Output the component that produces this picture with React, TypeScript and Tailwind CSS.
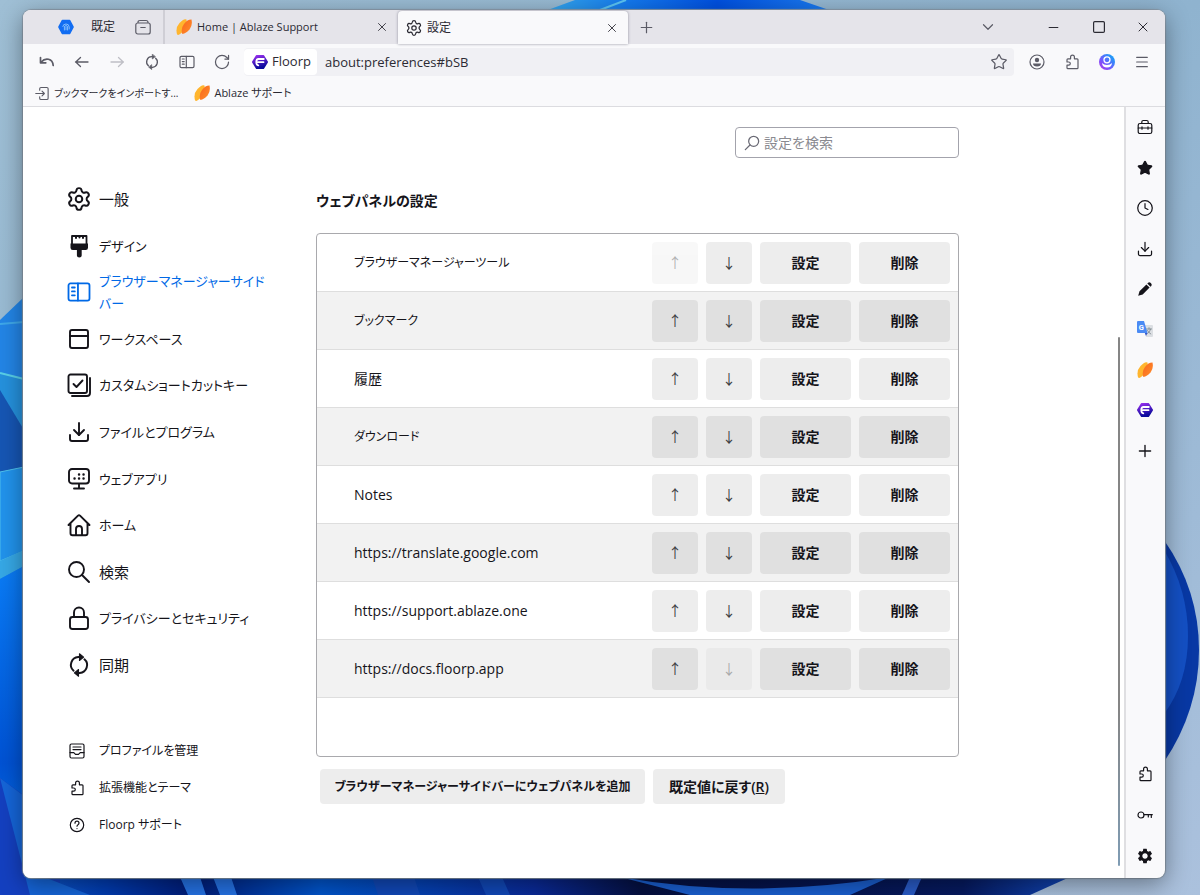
import { useId, useState, type ReactNode } from 'react';
import { ChevronDown, Clock, Download, Menu, Minus, PanelTop, Plus, RotateCw, Settings, Square, Star, X } from 'lucide-react';
import { MdSettings } from 'react-icons/md';

type IconProps = { className?: string };

function Svg({ className = 'size-4', box = '0 0 16 16', children }: { className?: string; box?: string; children: ReactNode }) {
  return (
    <svg
      className={`shrink-0 ${className}`}
      viewBox={box}
      fill="none"
      stroke="currentColor"
      strokeWidth="1.2"
      strokeLinecap="round"
      strokeLinejoin="round"
      aria-hidden="true"
    >
      {children}
    </svg>
  );
}

function PuzzleIcon({ className }: IconProps) {
  return (
    <Svg className={className}>
      <path d="M3 6.9V5.7q0-.9.9-.9h2.7V3.1a1.9 1.9 0 0 1 3.8 0v1.7h2.7q.9 0 .9.9v8q0 .9-.9.9H3.900q-.9 0-.9-.9v-2.500h1.700a1.600 1.600 0 0 0 0-3.200H3z" />
    </Svg>
  );
}

function SidebarIcon({ className }: IconProps) {
  return (
    <Svg className={className}>
      <rect x="1" y="2.3" width="14" height="11.4" rx="1.4" />
      <path d="M7.3 2.3v11.4M3.3 5h1.9M3.3 7.6h1.9M3.3 10.2h1.9" />
    </Svg>
  );
}

function SyncIcon({ className }: IconProps) {
  return (
    <Svg className={className}>
      <path d="M8.600 2.700H7.500A5.200 5.200 0 0 0 4.400 11.800M7.400 13.300h1.100A5.200 5.200 0 0 0 11.600 4.200" strokeWidth="1.300" />
      <path d="M8.300.5v4.500l2.800-2.200zM7.700 11v4.500l-2.800-2.200z" fill="currentColor" strokeWidth=".7" />
    </Svg>
  );
}

function SearchIcon({ className }: IconProps) {
  return (
    <Svg className={className} box="0 0 24 24">
      <circle cx="9.500" cy="9.500" r="7.500" strokeWidth="1.900" />
      <path d="M15 15l7 7" strokeWidth="1.900" />
    </Svg>
  );
}

function LockIcon({ className }: IconProps) {
  return (
    <Svg className={className} box="0 0 24 24">
      <g strokeWidth="1.900">
        <rect x="3" y="11" width="18" height="12" rx="2.500" />
        <path d="M7 11V6.500a5 5 0 0 1 10 0V11" />
      </g>
    </Svg>
  );
}

function BrushIcon({ className }: IconProps) {
  return (
    <Svg className={className} box="0 0 24 24">
      <path d="M5 10V2h14.500v8" strokeWidth="1.800" />
      <path d="M9 2.500v1.500M12.500 2.500v1M16 2.500v1.500" strokeWidth="2" />
      <path d="M3.500 9.500h17.500v4.200q0 2.300-2.300 2.300h-4v5.500q0 2-2.400 2t-2.400-2V16H5.800q-2.300 0-2.300-2.300z" fill="currentColor" stroke="none" />
    </Svg>
  );
}

function CheckStackIcon({ className }: IconProps) {
  return (
    <Svg className={className} box="0 0 24 24">
      <g strokeWidth="1.900">
        <rect x="1.500" y="1.500" width="18.500" height="18.500" rx="2" />
        <path d="m6.500 11 3 3 6-6.500" />
        <path d="M23 5v15q0 3-3 3H5" />
      </g>
    </Svg>
  );
}

function WebAppIcon({ className }: IconProps) {
  return (
    <Svg className={className} box="0 0 24 24">
      <rect x="2" y="2" width="20" height="14.500" rx="3" strokeWidth="1.900" />
      <path d="M12 17v4M7 21.500h10" strokeWidth="1.900" />
      <path d="M7.500 11.500h.1M12 11.500h.1M16.500 11.500h.1M12 7.500h.1M16.500 7.500h.1" strokeWidth="2.400" />
    </Svg>
  );
}

function HouseIcon({ className }: IconProps) {
  return (
    <Svg className={className} box="0 0 24 24">
      <path d="M1.500 12 11 2.600q1-.9 2 0L22.500 12M3.500 10.500v9.700q0 2 2 2h13q2 0 2-2v-9.700M9 22v-6q0-3 3-3t3 3v6" strokeWidth="1.900" />
    </Svg>
  );
}

function ProfileIcon({ className }: IconProps) {
  return (
    <Svg className={className}>
      <rect x="1" y="1" width="14" height="14" rx="1.500" />
      <path d="M4 4h8M4 6.600h8M1 9.600h3.800L6.500 11.300h3L11.200 9.600H15" />
    </Svg>
  );
}

function HelpIcon({ className }: IconProps) {
  return (
    <Svg className={className}>
      <circle cx="8" cy="8" r="6.700" />
      <path d="M6 6.200q0-2 2-2t2 1.900q0 1-1 1.600T8 9.200M8 11.500v.1" />
    </Svg>
  );
}

function ToolboxIcon({ className }: IconProps) {
  return (
    <Svg className={className}>
      <path d="M4.800 4.500V3q0-1.500 1.500-1.500h3.400q1.500 0 1.500 1.500v1.500" />
      <rect x="1.200" y="4.500" width="13.600" height="10" rx="1.800" />
      <path d="M1.200 9h13.600M5 7.800v2.400M11 7.800v2.400" />
    </Svg>
  );
}

function PencilIcon({ className }: IconProps) {
  return (
    <Svg className={className}>
      <path d="m1.200 14.800 1.300-4.500 6.900-6.900 3.200 3.200-6.900 6.900zM10.300 2.500l.8-.8q1.200-1 2.400.1l.7.7q1.100 1.200.1 2.400l-.8.8z" fill="currentColor" stroke="none" />
    </Svg>
  );
}

function KeyIcon({ className }: IconProps) {
  return (
    <Svg className={className}>
      <circle cx="4" cy="8" r="3" />
      <path d="M7 7.700h8.300M11.300 8v2M14.300 8v2.500" />
    </Svg>
  );
}

function AccountIcon({ className }: IconProps) {
  return (
    <Svg className={className}>
      <circle cx="8" cy="8" r="7" />
      <circle cx="8" cy="6" r="2.200" fill="currentColor" stroke="none" />
      <path d="M4 9.400h8q0 3-4 3t-4-3z" fill="currentColor" stroke="none" />
    </Svg>
  );
}

function ProfileAvatar({ className }: IconProps) {
  const id = useId();
  return (
    <Svg className={className}>
      <defs>
        <linearGradient id={id} x1="0" y1="1" x2="1" y2="0">
          <stop offset="0" stopColor="#b833e1" />
          <stop offset=".4" stopColor="#7059ff" />
          <stop offset="1" stopColor="#00b3f4" />
        </linearGradient>
      </defs>
      <circle cx="8" cy="8" r="8" fill={`url(#${id})`} stroke="none" />
      <circle cx="8" cy="5.800" r="3" stroke="#fff" strokeWidth="1.300" />
      <path d="M2.900 9q2 1.900 5.100 1.900T13.100 9q-.6 4.500-5.100 4.500T2.900 9z" fill="#fff" stroke="none" />
    </Svg>
  );
}

function ImportIcon({ className }: IconProps) {
  return (
    <Svg className={className}>
      <path d="M5 4.500V3q0-1.400 1.400-1.400h6.200Q14 1.600 14 3v10q0 1.400-1.400 1.400H6.400Q5 14.400 5 13v-1.500M.8 8h8.700M7.500 5.500 10 8l-2.500 2.500" />
    </Svg>
  );
}

function ArchiveIcon({ className }: IconProps) {
  return (
    <Svg className={className}>
      <path d="M3 3.500q0-2 2-2h6q2 0 2 2" />
      <rect x=".8" y="4" width="14.400" height="11" rx="2" />
      <path d="M5.800 8.500h4.400" />
    </Svg>
  );
}

function UndoIcon({ className }: IconProps) {
  return (
    <Svg className={className}>
      <path d="M1.500 3.500v5.300h5.300M2 8.300q3.500-4 7.500-3 4.300 1 4.700 6.200" strokeWidth="1.700" />
    </Svg>
  );
}

function ArrowIcon({ className }: IconProps) {
  return (
    <Svg className={className}>
      <path d="M14 8H1.500M6.500 3.500 1.800 8l4.700 4.500" strokeWidth="1.300" />
    </Svg>
  );
}

function AblazeLogo({ className }: IconProps) {
  const id = useId();
  return (
    <Svg className={className}>
      <defs>
        <linearGradient id={id} x1="0" y1="0" x2="1" y2="1">
          <stop offset="0" stopColor="#f9651e" />
          <stop offset="1" stopColor="#ff8f2a" />
        </linearGradient>
      </defs>
      <path d="M10.500.5Q11.500 8 7 12.500T1.200 15.600Q-1 9 3.500 4T10.500.5z" fill="#ffb52e" stroke="none" />
      <path d="M15.500.6q1.300 6-2 10T6.300 15q-1.800-5.500 1.700-10T15.500.6z" fill={`url(#${id})`} stroke="none" />
    </Svg>
  );
}

function FloorpLogo({ className }: IconProps) {
  const id = useId();
  return (
    <Svg className={className}>
      <defs>
        <linearGradient id={id} x1="0" y1="0" x2=".3" y2="1">
          <stop offset="0" stopColor="#9b2ff0" />
          <stop offset="1" stopColor="#0a0a9c" />
        </linearGradient>
      </defs>
      <path d="M4.700 1.700h6.600L15.200 8l-3.900 6.300H4.700L.8 8z" fill={`url(#${id})`} stroke={`url(#${id})`} strokeWidth="1.600" />
      <path d="M11.800 5H6.500Q4.300 5 4.300 8t2 3.300M6 8.200h5.500" stroke="#fff" strokeWidth="1.800" />
    </Svg>
  );
}

function WorkspaceLogo({ className }: IconProps) {
  return (
    <Svg className={className}>
      <path d="M4.500 1.500h7L15 8l-3.500 6.500h-7L1 8z" fill="#126df2" stroke="#126df2" strokeWidth="1.600" />
      <path d="M4.800 7.500Q5 5 8 5t3.200 3v2M6.400 11V8Q6.600 6.600 8 6.600T9.600 8v3M8 8.300v2.500" stroke="#9ed0ff" strokeWidth=".8" />
    </Svg>
  );
}

function TranslateLogo({ className }: IconProps) {
  return (
    <Svg className={className}>
      <path d="M6.500 4H15q1 0 1 1v10q0 1-1 1H9z" fill="#dcdfe3" stroke="none" />
      <path d="M9.500 8h5M12 6.700V8M13.700 8q-.8 3-3 4.500M10.500 9.500q1 2 3.300 3.500" stroke="#7b858c" strokeWidth=".8" />
      <path d="M1 0h6l3.500 12H1q-1 0-1-1V1Q0 0 1 0z" fill="#4b8bf4" stroke="none" />
      <path d="M7.800 12h2.700L9 15z" fill="#3557c8" stroke="none" />
      <text x="1.700" y="9" fontSize="7.500" fontWeight="700" fill="#fff" stroke="none" fontFamily="Roboto, sans-serif">G</text>
    </Svg>
  );
}

function Wallpaper() {
  return (
    <svg className="absolute inset-0 size-full" viewBox="0 0 1200 895" preserveAspectRatio="none" aria-hidden="true">
      <defs>
        <linearGradient id="sky" x1="0" y1="0" x2="1" y2="1">
          <stop offset="0" stopColor="#9fbfd5" />
          <stop offset=".5" stopColor="#8fb3cf" />
          <stop offset="1" stopColor="#abc1dd" />
        </linearGradient>
        <linearGradient id="deep" x1="0" y1="0" x2="0" y2="1">
          <stop offset="0" stopColor="#0a7cf6" />
          <stop offset=".6" stopColor="#0052d4" />
          <stop offset="1" stopColor="#0a83ee" />
        </linearGradient>
        <linearGradient id="top" x1="0" y1="0" x2="1" y2="0">
          <stop offset="0" stopColor="#35a8ee" />
          <stop offset=".3" stopColor="#1478ee" />
          <stop offset=".6" stopColor="#0050e0" />
          <stop offset="1" stopColor="#1c7cf0" />
        </linearGradient>
        <linearGradient id="floor" x1="0" y1="0" x2="1" y2="0">
          <stop offset="0" stopColor="#1565d8" />
          <stop offset=".1" stopColor="#003bb0" />
          <stop offset=".18" stopColor="#001c78" />
          <stop offset=".3" stopColor="#0055cc" />
          <stop offset=".5" stopColor="#0a2a98" />
          <stop offset=".6" stopColor="#051040" />
          <stop offset=".9" stopColor="#061a60" />
          <stop offset="1" stopColor="#1046b8" />
        </linearGradient>
      </defs>
      <rect width="1200" height="895" fill="url(#sky)" />
      <path d="M545 11 575 0h225l32 11z" fill="url(#top)" />
      <path d="M600 10 626 0" stroke="#5cc4f2" strokeWidth="2" />
      <path d="M0 320 24 297V895H0z" fill="#2385e6" />
      <path d="M0 324 24 322" stroke="#3fa8ea" strokeWidth="2" />
      <path d="M0 373 24 379V467L0 472z" fill="#2591dd" />
      <path d="M0 373 24 379" stroke="#59d0e8" strokeWidth="2" />
      <path d="M0 390 24 430V467L0 472z" fill="#1656b4" />
      <path d="M0 472 24 467V551L0 561z" fill="#2193ec" stroke="#4fc0ec" />
      <path d="M0 561 24 550V566L0 579z" fill="#36a8e6" />
      <path d="M0 579 24 566V895H0z" fill="url(#deep)" />
      <path d="M0 877H1010q30 0 60 0L1030 895H0z" fill="url(#floor)" />
      <path d="M0 778 60 822V895H0z" fill="#1440c0" />
      <path d="M0 778 24 796V877h20L90 895H30z" fill="#1565d8" />
      <path d="M180 877h20l6 18h-18zM213 877h18l6 18h-17z" fill="#2572e4" />
      <path d="M372 877h42l6 18h-42zM478 877h24l8 18h-24z" fill="#1148b8" />
      <path d="M620 877Q750 900 890 877L850 895H690z" fill="#1a5fd0" />
      <path d="M910 877h12l-8 18h-12z" fill="#2a5cc8" />
      <path d="M1164 540Q1199 590 1199 650T1164 762z" fill="#0838a4" />
      <path d="M1164 550Q1188 590 1188 636T1164 714z" fill="#1450c4" />
    </svg>
  );
}

const navItems = [
  { label: '一般', size: 'text-[15px]', icon: <Settings className="size-6 shrink-0" viewBox="1 1 22 22" strokeWidth={1.8} /> },
  { label: 'デザイン', size: 'text-[13px]', icon: <BrushIcon className="size-6" /> },
  { label: 'ブラウザーマネージャーサイドバー', size: 'text-[13px]', icon: <SidebarIcon className="size-6" /> },
  { label: 'ワークスペース', size: 'text-[13px]', icon: <PanelTop className="size-6 shrink-0" strokeWidth={1.9} /> },
  { label: 'カスタムショートカットキー', size: 'text-[13px]', icon: <CheckStackIcon className="size-6" /> },
  { label: 'ファイルとプログラム', size: 'text-[13px]', icon: <Download className="size-6 shrink-0" strokeWidth={1.9} /> },
  { label: 'ウェブアプリ', size: 'text-[13px]', icon: <WebAppIcon className="size-6" /> },
  { label: 'ホーム', size: 'text-[13px]', icon: <HouseIcon className="size-6" /> },
  { label: '検索', size: 'text-[15px]', icon: <SearchIcon className="size-6" /> },
  { label: 'プライバシーとセキュリティ', size: 'text-[13px]', icon: <LockIcon className="size-6" /> },
  { label: '同期', size: 'text-[15px]', icon: <SyncIcon className="size-6" /> },
];

const footerLinks = [
  { label: 'プロファイルを管理', icon: <ProfileIcon /> },
  { label: '拡張機能とテーマ', icon: <PuzzleIcon /> },
  { label: 'Floorp サポート', icon: <HelpIcon /> },
];

const panels = [
  { name: 'ブラウザーマネージャーツール', size: 'text-xs' },
  { name: 'ブックマーク', size: 'text-xs' },
  { name: '履歴', size: 'text-sm' },
  { name: 'ダウンロード', size: 'text-xs' },
  { name: 'Notes', size: 'text-sm' },
  { name: 'https://translate.google.com', size: 'text-sm' },
  { name: 'https://support.ablaze.one', size: 'text-sm' },
  { name: 'https://docs.floorp.app', size: 'text-sm' },
];

const sidebarPanels = [
  { label: 'ブラウザーマネージャーツール', icon: <ToolboxIcon /> },
  { label: 'ブックマーク', icon: <Star className="size-4" fill="currentColor" /> },
  { label: '履歴', icon: <Clock className="size-4" viewBox="1 1 22 22" strokeWidth={1.7} /> },
  { label: 'ダウンロード', icon: <Download className="size-4" viewBox="1 1 22 22" strokeWidth={1.7} /> },
  { label: 'Notes', icon: <PencilIcon /> },
  { label: 'Google 翻訳', icon: <TranslateLogo /> },
  { label: 'Ablaze サポート', icon: <AblazeLogo /> },
  { label: 'Floorp Docs', icon: <FloorpLogo /> },
  { label: '追加', icon: <Plus className="size-4" viewBox="2 2 20 20" strokeWidth={1.7} /> },
];

const sidebarTools = [
  { label: '拡張機能', icon: <PuzzleIcon /> },
  { label: 'パスワード', icon: <KeyIcon /> },
  { label: '設定', icon: <MdSettings className="size-[18px]" /> },
];

function ToolButton({ label, children }: { label: string; children: ReactNode }) {
  return (
    <button type="button" aria-label={label} className="flex h-7 w-[35px] shrink-0 items-center justify-center">
      {children}
    </button>
  );
}

function TabBar() {
  return (
    <header className="flex h-[34px] bg-[#e5e4ea] text-xs text-[#2b2a33]">
      <div className="flex w-[142px] items-center border-r-2 border-[#cfced5] pl-[35px]">
        <WorkspaceLogo />
        <button type="button" className="ml-[17px]">既定</button>
        <button type="button" aria-label="ワークスペース" className="ml-[20px] text-[#5b5b66]">
          <ArchiveIcon />
        </button>
      </div>
      <div className="flex w-[233px] items-center pr-[9px] pl-[11px]">
        <button type="button" role="tab" aria-selected="false" className="flex flex-1 items-center gap-[5px] text-[11px]">
          <AblazeLogo />
          Home | Ablaze Support
        </button>
        <button type="button" aria-label="タブを閉じる"><X className="size-[14px]" strokeWidth={1.5} /></button>
      </div>
      <div className="mt-px flex w-[230px] items-center rounded-t-sm bg-[#f9f9fb] pr-[9px] pl-2 shadow-[0_0_3px_#8f8f9d]">
        <button type="button" role="tab" aria-selected="true" className="flex flex-1 items-center gap-[5px]">
          <Settings className="size-4" viewBox="1 1 22 22" strokeWidth={1.7} />
          設定
        </button>
        <button type="button" aria-label="タブを閉じる"><X className="size-[14px]" strokeWidth={1.5} /></button>
      </div>
      <button type="button" aria-label="新しいタブ" className="ml-[11px] text-[#5b5b66]">
        <Plus className="size-[15px]" strokeWidth={1.6} viewBox="2 2 20 20" />
      </button>
      <div className="ml-auto flex items-center">
        <button type="button" aria-label="タブを一覧表示" className="mr-[34px] text-[#5b5b66]"><ChevronDown className="size-[18px]" strokeWidth={1.6} /></button>
        <button type="button" aria-label="最小化" className="flex w-[45px] justify-center"><Minus className="size-[15px]" strokeWidth={1.6} /></button>
        <button type="button" aria-label="最大化" className="flex w-[45px] justify-center"><Square className="size-3" viewBox="2 2 20 20" rx="0" strokeWidth={2} /></button>
        <button type="button" aria-label="閉じる" className="flex w-[44px] justify-center"><X className="size-4" strokeWidth={1.5} /></button>
      </div>
    </header>
  );
}

function NavBar() {
  const [url, setUrl] = useState('about:preferences#bSB');
  return (
    <div className="flex h-9 items-center px-[6px] text-[#5b5b66]">
      <ToolButton label="閉じたタブを開く"><UndoIcon /></ToolButton>
      <ToolButton label="戻る"><ArrowIcon /></ToolButton>
      <ToolButton label="進む"><ArrowIcon className="size-4 rotate-180 text-[#bfbfc6]" /></ToolButton>
      <ToolButton label="再起動"><SyncIcon /></ToolButton>
      <ToolButton label="サイドバー"><SidebarIcon /></ToolButton>
      <ToolButton label="再読み込み"><RotateCw className="size-4" viewBox="1 1 22 22" strokeWidth={1.7} /></ToolButton>
      <div className="mx-[5px] flex h-7 flex-1 items-center rounded bg-[#f0f0f4] text-[13px] text-[#2b2a33]">
        <button type="button" className="flex h-[26px] w-[73px] items-center gap-1 rounded bg-white pl-2">
          <FloorpLogo />
          Floorp
        </button>
        <input
          aria-label="アドレス"
          value={url}
          onChange={(e) => setUrl(e.target.value)}
          className="h-7 flex-1 bg-transparent px-2 outline-none"
        />
        <button type="button" aria-label="このページをブックマーク" className="mr-[7px] text-[#5b5b66]">
          <Star className="size-4" viewBox="1 1 22 22" strokeWidth={1.7} />
        </button>
      </div>
      <ToolButton label="アカウント"><AccountIcon /></ToolButton>
      <ToolButton label="拡張機能"><PuzzleIcon /></ToolButton>
      <ToolButton label="プロファイル"><ProfileAvatar /></ToolButton>
      <ToolButton label="メニュー"><Menu className="size-4" strokeWidth={1.8} /></ToolButton>
    </div>
  );
}

function BookmarksBar() {
  return (
    <div className="flex h-[27px] items-center gap-4 border-b border-[#dcdce0] pl-3 text-[11px] text-[#2b2a33]">
      <a href="#import" className="flex items-center gap-1 text-[10px]">
        <ImportIcon className="size-[15px] text-[#5b5b66]" />
        ブックマークをインポートす...
      </a>
      <a href="#ablaze" className="flex items-center gap-1">
        <AblazeLogo />
        Ablaze サポート
      </a>
    </div>
  );
}

function PanelRow({ name, size, first, last }: { name: string; size: string; first: boolean; last: boolean }) {
  const button = 'h-[42px] rounded bg-black/7 disabled:opacity-40';
  return (
    <li className="flex h-[58px] items-center gap-2 border-b border-[#dedede] pr-2 pl-[37px] even:bg-[#f2f2f2]">
      <span className={`flex-1 ${size}`}>{name}</span>
      <button type="button" aria-label="上へ" disabled={first} className={`${button} w-[46px] text-[#3c3c42]`}>↑</button>
      <button type="button" aria-label="下へ" disabled={last} className={`${button} w-[46px] text-[#3c3c42]`}>↓</button>
      <button type="button" className={`${button} w-[91px] font-semibold`}>設定</button>
      <button type="button" className={`${button} w-[91px] font-semibold`}>削除</button>
    </li>
  );
}

function Preferences() {
  const [query, setQuery] = useState('');
  return (
    <div className="flex flex-1 bg-white pl-11 text-sm text-[#15141a]">
      <nav className="w-[249px] shrink-0 pt-[69px]">
        <div className="grid h-[512px] auto-rows-fr">
          {navItems.map((item, i) => (
            <a key={item.label} href={`#${i}`} className={`flex items-center gap-2 leading-[22px] ${item.size} ${i === 2 ? 'text-[#0069e6]' : ''}`}>
              {item.icon}
              <span className="w-[168px]">{item.label}</span>
            </a>
          ))}
        </div>
        <div className="mt-11 text-xs">
          {footerLinks.map((item) => (
            <a key={item.label} href="#more" className="flex h-[37px] items-center gap-[14px] pl-[2px]">
              {item.icon}
              {item.label}
            </a>
          ))}
        </div>
      </nav>

      <main className="max-w-[643px] flex-1 pt-5">
        <label className="ml-auto flex h-[31px] w-56 items-center gap-1 rounded border border-[#a3a3ac] px-2">
          <SearchIcon className="size-4 -scale-x-100 text-[#6a6a75]" />
          <input
            type="search"
            aria-label="設定を検索"
            placeholder="設定を検索"
            value={query}
            onChange={(e) => setQuery(e.target.value)}
            className="w-full outline-none placeholder:text-[#8a8a90]"
          />
        </label>

        <h1 className="mt-[31px] text-sm leading-6 font-semibold">ウェブパネルの設定</h1>
        <ul className="mt-5 h-[524px] rounded border border-[#a9a9ad]">
          {panels.map((panel, i) => (
            <PanelRow key={panel.name} name={panel.name} size={panel.size} first={i === 0} last={i === panels.length - 1} />
          ))}
        </ul>
        <div className="mt-3 ml-1 flex gap-2 font-semibold">
          <button type="button" className="h-[35px] w-[325px] rounded bg-[#ededed] text-xs">
            ブラウザーマネージャーサイドバーにウェブパネルを追加
          </button>
          <button type="button" className="h-[35px] w-[132px] rounded bg-[#ededed]">
            既定値に戻す(<u>R</u>)
          </button>
        </div>
      </main>

      {/* Scrollbar thumb */}
      <div className="mt-[230px] mr-1 mb-3 ml-auto w-[2px] rounded bg-linear-to-b from-[#858585] from-70% to-[#7f9cb4]" />
    </div>
  );
}

function SidePanelBar() {
  return (
    <aside className="flex w-[41px] shrink-0 flex-col justify-between border-l-2 border-[#dfdfe2] pr-[2px] pb-[2px] text-[#15141a]">
      <div className="grid h-[364px] auto-rows-fr">
        {sidebarPanels.map((p) => (
          <button key={p.label} type="button" aria-label={p.label} className="flex items-center justify-center">{p.icon}</button>
        ))}
      </div>
      <div className="grid h-[122px] auto-rows-fr">
        {sidebarTools.map((p) => (
          <button key={p.label} type="button" aria-label={p.label} className="flex items-center justify-center">{p.icon}</button>
        ))}
      </div>
    </aside>
  );
}

export default function App() {
  return (
    <div
      lang="ja"
      className="relative flex min-h-screen flex-col pt-[10px] pr-[35px] pb-[17px] pl-[23px] font-['Open_Sans','Noto_Sans_CJK_JP',sans-serif] [font-feature-settings:'palt']"
    >
      <Wallpaper />
      <div className="relative flex flex-1 flex-col overflow-hidden rounded-lg bg-[#f9f9fb] shadow-[0_6px_24px_#00000066,0_0_1px_1px_#8f9fae]">
        <TabBar />
        <NavBar />
        <BookmarksBar />
        <div className="flex flex-1">
          <Preferences />
          <SidePanelBar />
        </div>
      </div>
    </div>
  );
}
